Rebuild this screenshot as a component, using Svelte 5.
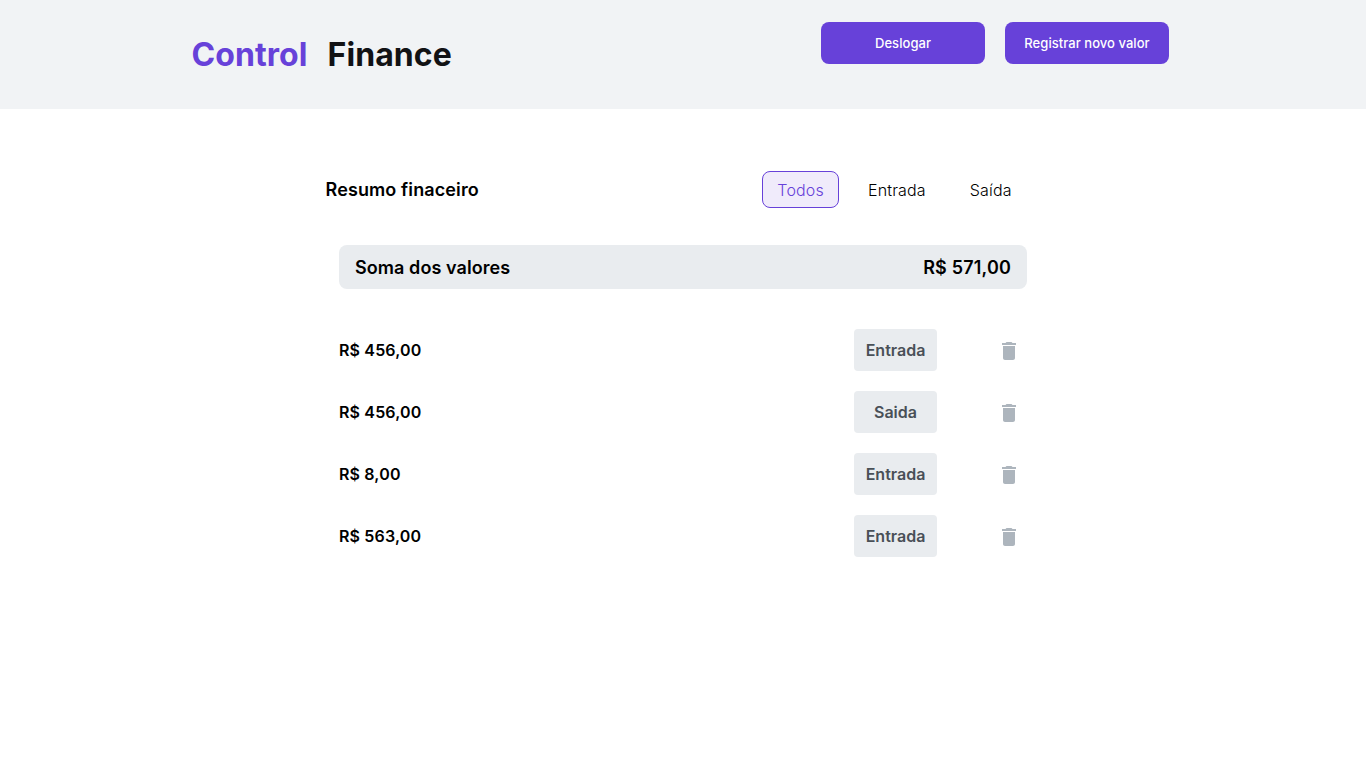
<script>
  const filters = ['Todos', 'Entrada', 'Saída'];
  const rows = [
    { value: 'R$ 456,00', type: 'Entrada' },
    { value: 'R$ 456,00', type: 'Saida' },
    { value: 'R$ 8,00', type: 'Entrada' },
    { value: 'R$ 563,00', type: 'Entrada' }
  ];
  let active = $state('Todos');
</script>

<header>
  <h1><span class="brand">Control</span><span>Finance</span></h1>
  <div class="actions">
    <button class="primary">Deslogar</button>
    <button class="primary">Registrar novo valor</button>
  </div>
</header>

<main>
  <section class="summary">
    <h2>Resumo finaceiro</h2>
    <nav>
      {#each filters as filter}
        <button class="filter" class:active={active === filter} onclick={() => (active = filter)}>{filter}</button>
      {/each}
    </nav>
  </section>
  <section class="total">
    <span>Soma dos valores</span>
    <span class="sum">R$ 571,00</span>
  </section>
  <ul>
    {#each rows as row}
      <li>
        <span class="value">{row.value}</span>
        <span class="type">{row.type}</span>
        <button class="trash" aria-label="Excluir">
          <svg width="14" height="18" viewBox="0 0 14 18"><path d="M1 16c0 1.1.9 2 2 2h8c1.1 0 2-.9 2-2V4H1v12zM14 1h-3.5l-1-1h-5l-1 1H0v2h14V1z" fill="#ADB5BD" /></svg>
        </button>
      </li>
    {/each}
  </ul>
</main>

<style>
  :global(body) {
    background: #fff;
    font-family: Inter, sans-serif;
    color: #000;
  }
  button {
    font-family: inherit;
    cursor: pointer;
  }
  header {
    box-sizing: border-box;
    height: 109px;
    padding: 0 197px 0 191.5px;
    background: #f1f3f5;
    display: flex;
    justify-content: space-between;
    align-items: center;
  }
  h1 {
    margin: 0;
    display: flex;
    gap: 20px;
    font-size: 32px;
    line-height: 39px;
    font-weight: 700;
    letter-spacing: 0.08px;
    color: #121214;
  }
  .brand {
    color: #6741d9;
  }
  .actions {
    align-self: flex-start;
    margin-top: 22px;
    display: flex;
    gap: 20px;
  }
  .primary {
    width: 164px;
    height: 42px;
    padding: 0;
    border: 0;
    border-radius: 8px;
    background: #6741d9;
    color: #fff;
    font-size: 13px;
    font-weight: 500;
    letter-spacing: 0.05px;
  }
  main {
    width: 688px;
    margin: 62px auto 0;
  }
  .summary {
    display: flex;
    justify-content: space-between;
    align-items: center;
    height: 37px;
    margin-left: -13.5px;
  }
  h2 {
    margin: 0;
    font-size: 18px;
    font-weight: 600;
    letter-spacing: 0.12px;
  }
  nav {
    display: flex;
    gap: 13.4px;
  }
  .filter {
    height: 37px;
    padding: 0 14.4px;
    border: 1px solid transparent;
    border-radius: 8px;
    background: transparent;
    font-size: 16px;
    font-weight: 300;
    letter-spacing: 0.14px;
    color: #000;
  }
  .filter.active {
    border-color: #6741d9;
    background: #f0ebfb;
    color: #6741d9;
  }
  .total {
    margin-top: 37px;
    height: 44px;
    padding: 0 16px;
    border-radius: 8px;
    background: #e9ecef;
    display: flex;
    justify-content: space-between;
    align-items: center;
    font-size: 18px;
    font-weight: 600;
    letter-spacing: 0.07px;
  }
  .sum {
    letter-spacing: 0.17px;
  }
  ul {
    margin: 40px 0 0;
    padding: 0;
    list-style: none;
    display: flex;
    flex-direction: column;
    gap: 20px;
  }
  li {
    height: 42px;
    display: flex;
    align-items: center;
    font-weight: 600;
    font-size: 16px;
  }
  .value {
    flex: 1;
    letter-spacing: 0.15px;
  }
  .type {
    width: 83px;
    line-height: 42px;
    margin-right: 65px;
    border-radius: 4px;
    background: #e9ecef;
    color: #495057;
    text-align: center;
  }
  .trash {
    width: 14px;
    height: 18px;
    padding: 0;
    margin: 1px 11px 0 0;
    border: 0;
    background: none;
  }
  .trash svg {
    display: block;
  }
</style>
